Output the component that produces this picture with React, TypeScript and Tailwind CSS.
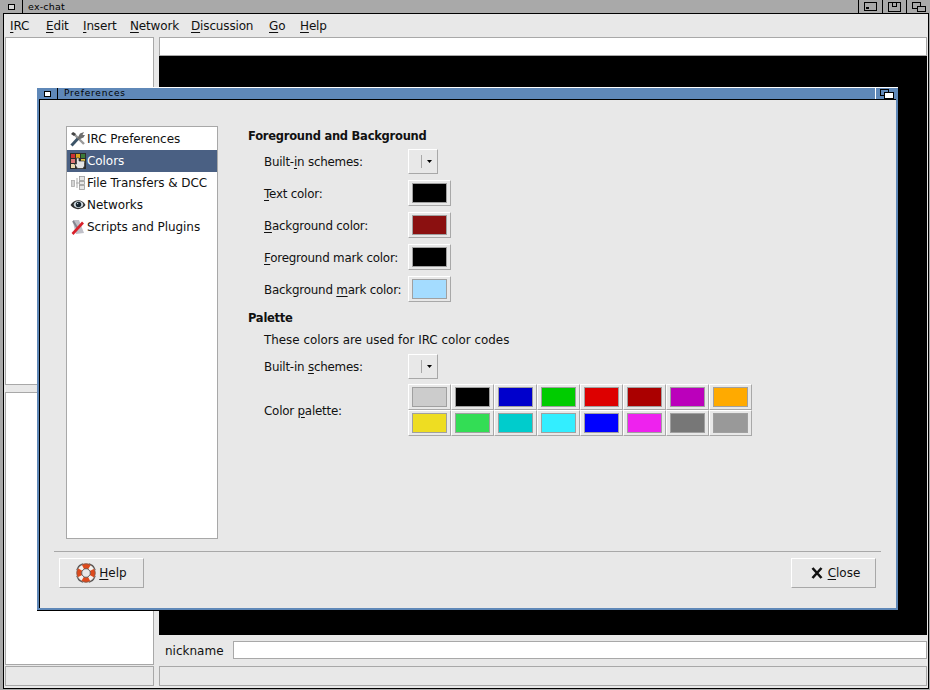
const menus: [string, string, string][] = [
  ['I', 'RC', 'w-[36px]'],
  ['E', 'dit', 'w-[37px]'],
  ['I', 'nsert', 'w-[47px]'],
  ['N', 'etwork', 'w-[61px]'],
  ['D', 'iscussion', 'w-[78px]'],
  ['G', 'o', 'w-[31px]'],
  ['H', 'elp', 'w-[30px]'],
];

const palette = [
  '#cccccc', '#000000', '#0000cc', '#00cc00', '#dd0000', '#aa0000', '#bb00bb', '#ffaa00',
  '#eedd22', '#33dd55', '#00cccc', '#33eeff', '#0000ff', '#ee22ee', '#777777', '#999999',
];

function ToolsIcon() {
  return (
    <svg width="16" height="16" viewBox="0 0 16 16">
      <path d="M3 2 L14 13" stroke="#9a9a9a" strokeWidth="2.4" />
      <path d="M1 3 L3 1 L6 3 L4 5Z" fill="#444" />
      <path d="M1.5 14.5 L8 7.5" stroke="#3c5468" strokeWidth="3" />
      <path d="M7 8 L10 2.5 L14 1 L12.5 4 L15 4 L13.5 6.5 L9 8.5Z" fill="#6f6f6f" />
    </svg>
  );
}

function ColorsIcon() {
  return (
    <svg width="16" height="16" viewBox="0 0 16 16">
      <rect x="0" y="0" width="16" height="16" fill="#2c2c2c" />
      <rect x="1" y="1" width="4" height="4" fill="#c33" />
      <rect x="6" y="1" width="4" height="4" fill="#d9a520" />
      <rect x="11" y="1" width="4" height="4" fill="#3a7a3a" />
      <rect x="1" y="6" width="4" height="4" fill="#d77" />
      <rect x="1" y="11" width="4" height="4" fill="#e9d9b0" />
      <rect x="11" y="6" width="4" height="4" fill="#ddc040" />
      <path d="M6.5 5 H9 V8 H14.5 V13 L13 15.5 H7.5 L4.5 11 H6.5Z" fill="#e4e4e4" stroke="#333" strokeWidth="0.7" />
    </svg>
  );
}

function FilesIcon() {
  return (
    <svg width="16" height="16" viewBox="0 0 16 16">
      <rect x="1.5" y="5.5" width="3" height="6" fill="#d4d4d4" stroke="#aaa" strokeWidth="0.8" />
      <path d="M6 8 H9 M7 3 V13" stroke="#aaa" strokeWidth="1" />
      <rect x="9.5" y="1.5" width="5" height="4" fill="#e6e6e6" stroke="#999" strokeWidth="0.8" />
      <rect x="9.5" y="6.5" width="5" height="3" fill="#e6e6e6" stroke="#999" strokeWidth="0.8" />
      <rect x="9.5" y="10.5" width="5" height="4" fill="#e6e6e6" stroke="#999" strokeWidth="0.8" />
    </svg>
  );
}

function EyeIcon() {
  return (
    <svg width="16" height="16" viewBox="0 0 16 16">
      <path d="M0.5 8 C4 2 12 1.5 15.5 8 C12 13.5 4 13.5 0.5 8Z" fill="#2e2e2e" />
      <ellipse cx="8.5" cy="7.5" rx="4.8" ry="3.6" fill="#c9d4da" />
      <circle cx="8.5" cy="7.5" r="2.7" fill="#16242f" />
      <circle cx="7.6" cy="6.6" r="0.7" fill="#dfe6ea" />
    </svg>
  );
}

function ScriptsIcon() {
  return (
    <svg width="16" height="16" viewBox="0 0 16 16">
      <path d="M3 1 L9 1 L14 14 L6 15 L4 8Z" fill="#c0c0c8" />
      <path d="M3 2 L8 10" stroke="#85858f" strokeWidth="2" />
      <path d="M2.5 15 L13 3.5" stroke="#d8202a" strokeWidth="2.6" />
    </svg>
  );
}

function BuoyIcon() {
  return (
    <svg width="20" height="20" viewBox="0 0 20 20">
      <path d="M3 3 L7 1 M17 3 L13 1 M3 17 L7 19 M17 17 L13 19 M1 7 L3 3 M19 7 L17 3 M1 13 L3 17 M19 13 L17 17" stroke="#555" strokeWidth="1.6" />
      <circle cx="10" cy="10" r="6.8" fill="none" stroke="#f4f1ee" strokeWidth="5" />
      <circle cx="10" cy="10" r="6.8" fill="none" stroke="#dd4a1c" strokeWidth="5" strokeDasharray="6.7 3.98" transform="rotate(-28 10 10)" />
      <circle cx="10" cy="10" r="9.3" fill="none" stroke="#6a5a55" strokeWidth="0.7" />
      <circle cx="10" cy="10" r="4.3" fill="#e8e8e8" stroke="#444" strokeWidth="0.8" />
    </svg>
  );
}

function CloseIcon() {
  return (
    <svg width="12" height="12" viewBox="0 0 12 12">
      <path d="M1.5 1 L10.5 11 M10.5 1 L1.5 11" stroke="#111" strokeWidth="2.6" />
    </svg>
  );
}

const categories = [
  { label: 'IRC Preferences', icon: <ToolsIcon /> },
  { label: 'Colors', icon: <ColorsIcon />, active: true },
  { label: 'File Transfers & DCC', icon: <FilesIcon /> },
  { label: 'Networks', icon: <EyeIcon /> },
  { label: 'Scripts and Plugins', icon: <ScriptsIcon /> },
];

const raised = 'border border-t-white border-l-white border-r-[#a8a8a8] border-b-[#a8a8a8]';

function ColorButton({ color }: { color: string }) {
  return (
    <div className={`${raised} flex items-center justify-center w-[43px] h-[26px]`}>
      <div className="w-[35px] h-[20px] border border-[#a0a0a0]" style={{ backgroundColor: color }} />
    </div>
  );
}

function SchemeButton() {
  return (
    <div className={`${raised} w-[30px] h-[25px] flex items-center`}>
      <div className="w-[1px] h-[13px] bg-[#a8a8a8] ml-[12px]" />
      <svg width="5" height="3" viewBox="0 0 5 3" className="ml-[5px]">
        <path d="M0 0 H5 L2.5 3Z" fill="#000" />
      </svg>
    </div>
  );
}

function U({ children }: { children: string }) {
  return <span className="underline underline-offset-2">{children}</span>;
}

function Row({ label, children }: { label: React.ReactNode; children: React.ReactNode }) {
  return (
    <div className="flex items-center">
      <div className="w-[160px] pl-[16px] pt-[2px] shrink-0 whitespace-nowrap tracking-[-0.22px]">{label}</div>
      {children}
    </div>
  );
}

function WindowButton({ children }: { children: React.ReactNode }) {
  return <div className="w-[24px] h-[13px] border-l border-black flex items-center justify-center">{children}</div>;
}

export default function App() {
  return (
    <div className="relative w-[930px] h-[690px] overflow-hidden bg-[#a9a9a9] text-[11.9px] leading-[15px] text-[#111] font-['DejaVu_Sans',sans-serif]">
      <div className="h-[13px] flex items-center">
        <div className="w-[23px] h-[13px] border-r border-black flex items-center justify-center">
          <div className="w-[7px] h-[6px] bg-[#d8d8d8] border border-black" />
        </div>
        <span className="ml-[5px] text-[9.5px] tracking-[0.2px] text-black">ex-chat</span>
        <div className="ml-auto flex">
          <WindowButton>
            <div className="w-[13px] h-[9px] border border-black relative">
              <div className="absolute left-[1px] bottom-[1px] w-[3px] h-[2px] border border-black" />
            </div>
          </WindowButton>
          <WindowButton>
            <div className="w-[13px] h-[10px] border border-black relative">
              <div className="absolute left-[3px] top-0 w-[5px] h-[4px] border-l border-r border-b border-black" />
            </div>
          </WindowButton>
          <WindowButton>
            <div className="w-[14px] h-[10px] relative">
              <div className="absolute left-0 top-0 w-[9px] h-[7px] border border-black" />
              <div className="absolute right-0 bottom-0 w-[9px] h-[6px] border border-black bg-[#a9a9a9]" />
            </div>
          </WindowButton>
        </div>
      </div>
      <div className="h-[676px] ml-[3px] mr-[1px] border border-black bg-[#e8e8e8] flex flex-col">
        <div className="h-[23px] flex items-center pl-[6px] pt-[2px] text-[12px]">
          {menus.map(([a, b, w], i) => (
            <span key={i} className={`${w} tracking-[-0.15px] whitespace-nowrap`}><U>{a}</U>{b}</span>
          ))}
        </div>
        <div className="flex h-[628px] pl-[1px] pr-[1px]">
          <div className="w-[149px] flex flex-col">
            <div className="h-[348px] bg-white border border-[#a8a8a8]" />
            <div className="h-[7px]" />
            <div className="flex-1 bg-white border border-[#a8a8a8]" />
          </div>
          <div className="flex-1 ml-[5px] flex flex-col">
            <div className="h-[19px] bg-white border border-[#a8a8a8]" />
            <div className="h-[579px] bg-black" />
            <div className="h-[30px] flex items-center">
              <span className="ml-[6px] w-[68px] pt-[2px] text-[12px]">nickname</span>
              <div className="flex-1 h-[18px] bg-white border border-[#a8a8a8]" />
            </div>
          </div>
        </div>
        <div className="h-[20px] flex pl-[1px] pr-[1px] mt-px">
          <div className="w-[149px] border border-[#a8a8a8]" />
          <div className="flex-1 ml-[5px] border border-[#a8a8a8]" />
        </div>
      </div>

      <div className="absolute left-[37px] top-[87px] w-[862px] h-[524px] bg-[#5f88b8] border-b border-r border-black flex flex-col">
        <div className="h-[12px] flex items-center border-t border-white">
          <div className="w-[21px] h-[12px] border-r border-black flex items-center justify-center">
            <div className="w-[7px] h-[6px] bg-white border border-black" />
          </div>
          <span className="ml-[6px] text-[9px] tracking-[0.8px] text-black">Preferences</span>
          <div className="ml-auto w-[23px] h-[12px] border-l border-white flex items-center justify-center">
            <div className="w-[14px] h-[10px] relative">
              <div className="absolute left-0 top-0 w-[9px] h-[7px] border border-black" />
              <div className="absolute right-0 bottom-0 w-[10px] h-[7px] border border-black bg-white" />
            </div>
          </div>
        </div>
        <div className="flex-1 mx-[2px] mb-[2px] border-l border-t border-black bg-[#e8e8e8] pl-[14px] pr-[15px] flex flex-col">
          <div className="flex flex-1 min-h-0 pt-[26px]">
            <div className="ml-[12px] w-[152px] h-[413px] bg-white border border-[#a8a8a8] shrink-0 py-px">
              {categories.map((c) => (
                <div key={c.label} className={`h-[22px] flex items-center gap-[1px] pl-[3px] text-[12px] tracking-[-0.06px] whitespace-nowrap ${c.active ? 'bg-[#4a6083] text-white' : ''}`}>
                  <span className="w-[16px] h-[16px] shrink-0">{c.icon}</span>
                  <span>{c.label}</span>
                </div>
              ))}
            </div>
            <div className="ml-[30px] pt-[2px] flex flex-col">
              <div className="font-bold text-[11.5px] tracking-[-0.25px] h-[15px] pt-px mb-[6px]">Foreground and Background</div>
              <div className="flex flex-col gap-[6px]">
                <Row label={<>Built-<U>i</U>n schemes:</>}><SchemeButton /></Row>
                <Row label={<><U>T</U>ext color:</>}><ColorButton color="#000000" /></Row>
                <Row label={<><U>B</U>ackground color:</>}><ColorButton color="#8b1010" /></Row>
                <Row label={<><U>F</U>oreground mark color:</>}><ColorButton color="#000000" /></Row>
                <Row label={<>Background <U>m</U>ark color:</>}><ColorButton color="#a4dcff" /></Row>
              </div>
              <div className="font-bold text-[11.5px] tracking-[-0.25px] h-[15px] pt-px mt-[8px]">Palette</div>
              <div className="pl-[16px] h-[15px] pt-px mt-[7px]">These colors are used for IRC color codes</div>
              <div className="mt-[7px]">
                <Row label={<>Built-in <U>s</U>chemes:</>}><SchemeButton /></Row>
              </div>
              <div className="mt-[5px]">
                <Row label={<>Color <U>p</U>alette:</>}>
                  <div className="grid grid-cols-8 w-[344px]">
                    {palette.map((c, i) => (
                      <ColorButton key={i} color={c} />
                    ))}
                  </div>
                </Row>
              </div>
            </div>
          </div>
          <div className="h-[57px] border-t border-[#a8a8a8] flex items-start justify-between px-[5px] pt-[6px]">
            <div className={`${raised} w-[85px] h-[30px] flex items-center justify-center gap-[3px] text-[12px]`}>
              <BuoyIcon />
              <span><U>H</U>elp</span>
            </div>
            <div className={`${raised} w-[85px] h-[30px] flex items-center justify-center gap-[5px] pl-[4px] text-[12px]`}>
              <CloseIcon />
              <span><U>C</U>lose</span>
            </div>
          </div>
        </div>
      </div>
    </div>
  );
}
